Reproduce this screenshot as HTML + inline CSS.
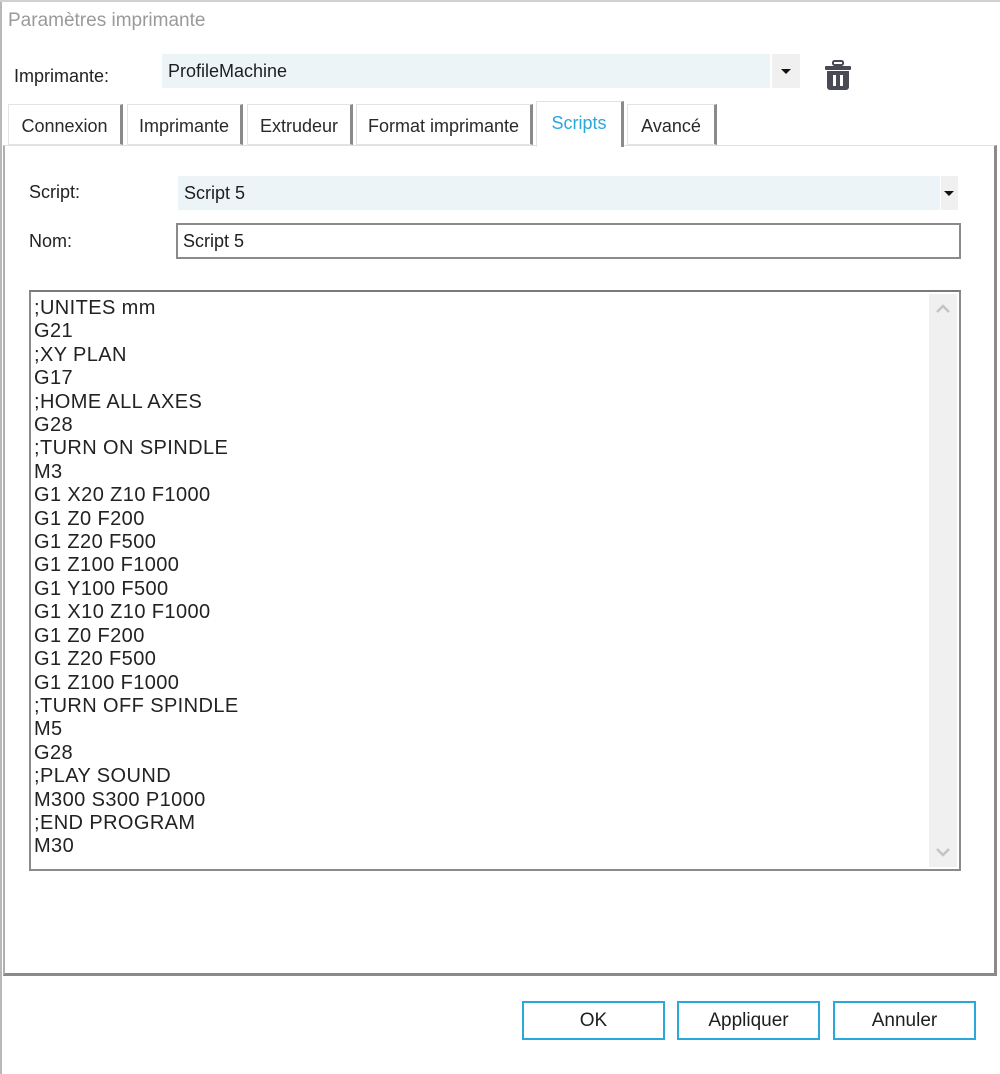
<!DOCTYPE html>
<html><head><meta charset="utf-8"><style>
*{box-sizing:border-box;margin:0;padding:0}
body{width:1000px;height:1074px;background:#fff;font-family:"Liberation Sans",sans-serif;color:#1e1e1e;position:relative;overflow:hidden}
.a{position:absolute}
.title{left:8px;top:10px;font-size:19px;color:#9a9a9a}
.lbl{font-size:18px;color:#222}
.combo{background:#ecf4f8;font-size:18px;padding-left:6px;line-height:34px}
.btn{background:#f0f0f0}
.tri{width:0;height:0;border-left:5px solid transparent;border-right:5px solid transparent;border-top:5px solid #111}
.tab{top:104px;height:41px;background:#fff;border:1px solid #e3e3e3;border-right:3px solid #8a8a8a;font-size:18px;text-align:center;line-height:42px;color:#2a2a2a}
.panel{left:3px;top:145px;width:994px;height:831px;border:1px solid #e0e0e0;border-right:3px solid #8a8a8a;border-bottom:3px solid #8a8a8a;border-left:2px solid #b0b0b0}
.code{left:29px;top:290px;width:932px;height:581px;border:2px solid #8a8a8a;border-top-color:#7a7a7a}
.lines{position:absolute;left:3px;top:5px;font-size:20px;line-height:23.4px;letter-spacing:0.4px;white-space:pre;color:#222}
.sb{position:absolute;right:2px;top:2px;width:28px;bottom:2px;background:#f0f0f0}
.ob{top:1001px;height:39px;width:143px;border:2px solid #2aa8dc;font-size:19px;text-align:center;line-height:36px;color:#1e1e1e}
</style></head><body>
<div class="a" style="left:0;top:0;width:2px;height:1074px;background:#b8b8b8"></div>
<div class="a" style="left:0;top:0;width:1000px;height:2px;background:#d0d0d0"></div>
<div class="a title">Paramètres imprimante</div>
<div class="a lbl" style="left:14px;top:66px">Imprimante:</div>
<div class="a combo" style="left:162px;top:54px;width:608px;height:34px">ProfileMachine</div>
<div class="a btn" style="left:772px;top:54px;width:28px;height:34px"><div class="tri a" style="left:9px;top:15px"></div></div>
<svg class="a" style="left:824px;top:60px" width="28" height="31" viewBox="0 0 28 31"><rect x="9" y="1" width="10" height="4" rx="1.5" fill="none" stroke="#4a4a55" stroke-width="2"/><rect x="1" y="6" width="26" height="4" rx="1" fill="#4a4a55"/><path d="M3 11h22v16a3 3 0 0 1-3 3H6a3 3 0 0 1-3-3z" fill="#4a4a55"/><rect x="9" y="15" width="3" height="11" fill="#fff"/><rect x="16" y="15" width="3" height="11" fill="#fff"/></svg>
<div class="a panel"></div>
<div class="a tab" style="left:8px;width:115px">Connexion</div>
<div class="a tab" style="left:127px;width:116px">Imprimante</div>
<div class="a tab" style="left:247px;width:106px">Extrudeur</div>
<div class="a tab" style="left:356px;width:177px">Format imprimante</div>
<div class="a tab" style="left:536px;top:101px;height:46px;width:88px;color:#2aa8dc;line-height:42px;border-bottom:none">Scripts</div>
<div class="a tab" style="left:627px;width:90px">Avancé</div>
<div class="a lbl" style="left:29px;top:182px">Script:</div>
<div class="a combo" style="left:178px;top:176px;width:762px;height:34px">Script 5</div>
<div class="a btn" style="left:941px;top:176px;width:17px;height:34px"><div class="tri a" style="left:3px;top:15px"></div></div>
<div class="a lbl" style="left:29px;top:231px">Nom:</div>
<div class="a" style="left:176px;top:223px;width:785px;height:36px;border:2px solid #8a8a8a;font-size:18px;padding-left:5px;line-height:32px">Script 5</div>
<div class="a code"><div class="lines">;UNITES mm
G21
;XY PLAN
G17
;HOME ALL AXES
G28
;TURN ON SPINDLE
M3
G1 X20 Z10 F1000
G1 Z0 F200
G1 Z20 F500
G1 Z100 F1000
G1 Y100 F500
G1 X10 Z10 F1000
G1 Z0 F200
G1 Z20 F500
G1 Z100 F1000
;TURN OFF SPINDLE
M5
G28
;PLAY SOUND
M300 S300 P1000
;END PROGRAM
M30</div><div class="sb"><svg class="a" style="left:7px;top:10px" width="14" height="10"><path d="M1 8l6-6 6 6" fill="none" stroke="#c4c4c4" stroke-width="2.5"/></svg><svg class="a" style="left:7px;bottom:10px" width="14" height="10"><path d="M1 2l6 6 6-6" fill="none" stroke="#c4c4c4" stroke-width="2.5"/></svg></div></div>
<div class="a ob" style="left:522px">OK</div>
<div class="a ob" style="left:677px">Appliquer</div>
<div class="a ob" style="left:833px">Annuler</div>
</body></html>
